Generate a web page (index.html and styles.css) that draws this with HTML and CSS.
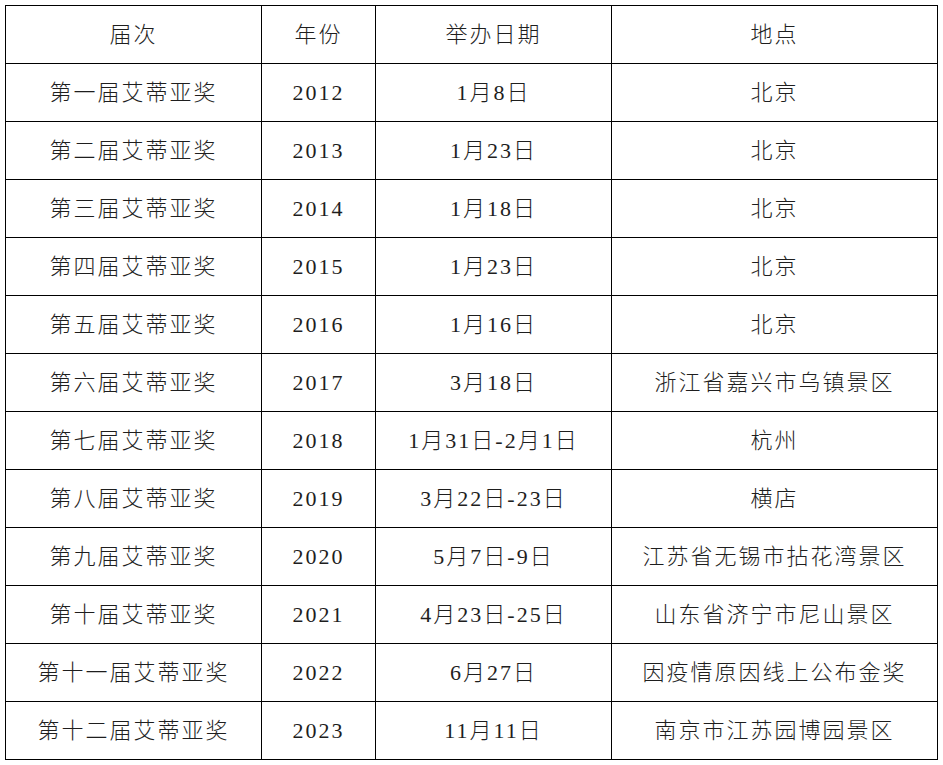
FILE: index.html
```html
<!DOCTYPE html>
<html lang="zh-CN">
<head>
<meta charset="utf-8">
<title>艾蒂亚奖</title>
<link rel="stylesheet" href="styles.css">
</head>
<body>
<table class="awards">
  <colgroup>
    <col class="c1"><col class="c2"><col class="c3"><col class="c4">
  </colgroup>
  <tr><td>届次</td><td>年份</td><td>举办日期</td><td>地点</td></tr>
  <tr><td>第一届艾蒂亚奖</td><td>2012</td><td>1月8日</td><td>北京</td></tr>
  <tr><td>第二届艾蒂亚奖</td><td>2013</td><td>1月23日</td><td>北京</td></tr>
  <tr><td>第三届艾蒂亚奖</td><td>2014</td><td>1月18日</td><td>北京</td></tr>
  <tr><td>第四届艾蒂亚奖</td><td>2015</td><td>1月23日</td><td>北京</td></tr>
  <tr><td>第五届艾蒂亚奖</td><td>2016</td><td>1月16日</td><td>北京</td></tr>
  <tr><td>第六届艾蒂亚奖</td><td>2017</td><td>3月18日</td><td>浙江省嘉兴市乌镇景区</td></tr>
  <tr><td>第七届艾蒂亚奖</td><td>2018</td><td>1月31日-2月1日</td><td>杭州</td></tr>
  <tr><td>第八届艾蒂亚奖</td><td>2019</td><td>3月22日-23日</td><td>横店</td></tr>
  <tr><td>第九届艾蒂亚奖</td><td>2020</td><td>5月7日-9日</td><td>江苏省无锡市拈花湾景区</td></tr>
  <tr><td>第十届艾蒂亚奖</td><td>2021</td><td>4月23日-25日</td><td>山东省济宁市尼山景区</td></tr>
  <tr><td>第十一届艾蒂亚奖</td><td>2022</td><td>6月27日</td><td>因疫情原因线上公布金奖</td></tr>
  <tr><td>第十二届艾蒂亚奖</td><td>2023</td><td>11月11日</td><td>南京市江苏园博园景区</td></tr>
</table>
</body>
</html>
```

FILE: styles.css
```css
html, body {
  background: #ffffff;
}
body {
  margin: 5px;
  font-family: "Liberation Serif", "Noto Sans CJK SC", serif;
  color: #1e1e1e;
}
.awards {
  border-collapse: collapse;
  table-layout: fixed;
  width: 932px;
}
.c1 { width: 256px; }
.c2 { width: 114px; }
.c3 { width: 236px; }
.c4 { width: 326px; }
.awards td {
  border: 1px solid #000;
  height: 57px;
  padding: 0;
  text-align: center;
  vertical-align: middle;
  font-size: 22px;
  font-weight: 300;
  letter-spacing: 2px;
  line-height: 1;
}
```
